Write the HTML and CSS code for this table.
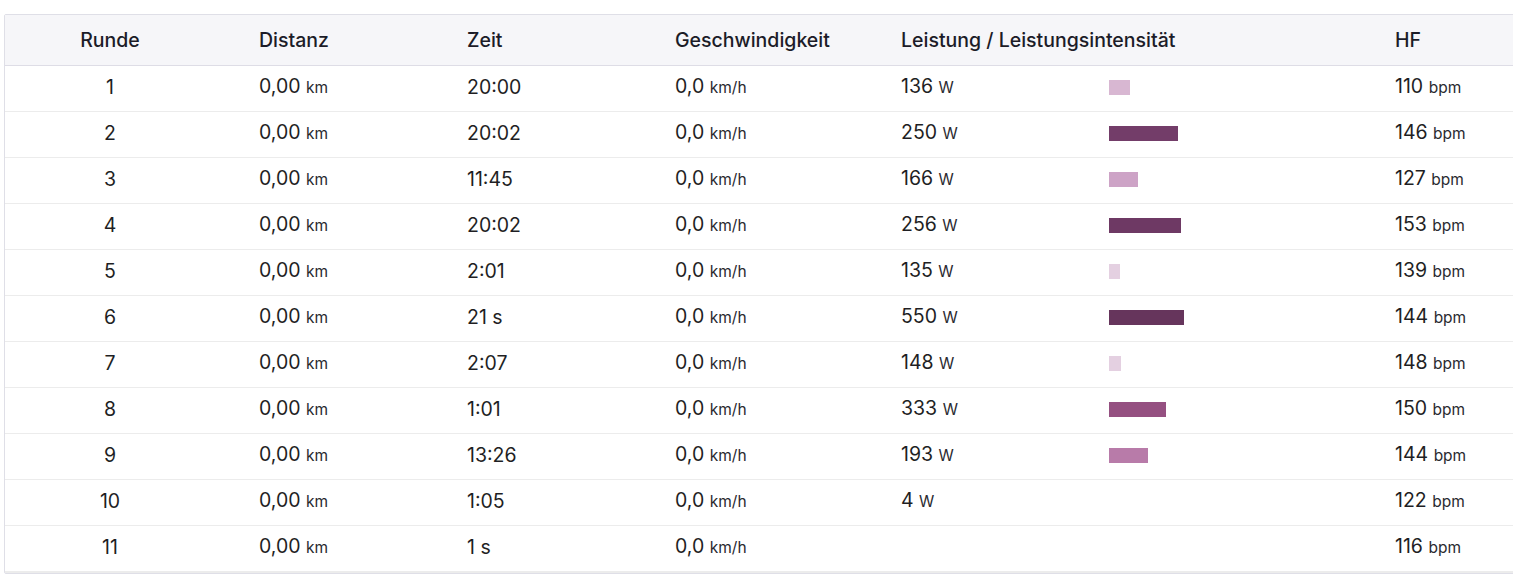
FILE: index.html
```html
<!DOCTYPE html>
<html lang="de">
<head>
<meta charset="utf-8">
<link rel="stylesheet" href="styles.css">
</head>
<body>
<div class="page">
  <div class="card">
    <div class="row head">
      <div class="c c1">Runde</div>
      <div class="c">Distanz</div>
      <div class="c">Zeit</div>
      <div class="c">Geschwindigkeit</div>
      <div class="c span2">Leistung / Leistungsintensität</div>
      <div class="c">HF</div>
    </div>
    <div class="row"><div class="c c1">1</div><div class="c">0,00 <span class="u">km</span></div><div class="c">20:00</div><div class="c">0,0 <span class="u">km/h</span></div><div class="c">136 <span class="u">W</span></div><div class="c"><span class="bar" style="width:21px;background:#d8b7d2"></span></div><div class="c">110 <span class="u">bpm</span></div></div>
    <div class="row"><div class="c c1">2</div><div class="c">0,00 <span class="u">km</span></div><div class="c">20:02</div><div class="c">0,0 <span class="u">km/h</span></div><div class="c">250 <span class="u">W</span></div><div class="c"><span class="bar" style="width:69px;background:#733d69"></span></div><div class="c">146 <span class="u">bpm</span></div></div>
    <div class="row"><div class="c c1">3</div><div class="c">0,00 <span class="u">km</span></div><div class="c">11:45</div><div class="c">0,0 <span class="u">km/h</span></div><div class="c">166 <span class="u">W</span></div><div class="c"><span class="bar" style="width:29px;background:#cda3c6"></span></div><div class="c">127 <span class="u">bpm</span></div></div>
    <div class="row"><div class="c c1">4</div><div class="c">0,00 <span class="u">km</span></div><div class="c">20:02</div><div class="c">0,0 <span class="u">km/h</span></div><div class="c">256 <span class="u">W</span></div><div class="c"><span class="bar" style="width:72px;background:#6e3964"></span></div><div class="c">153 <span class="u">bpm</span></div></div>
    <div class="row"><div class="c c1">5</div><div class="c">0,00 <span class="u">km</span></div><div class="c">2:01</div><div class="c">0,0 <span class="u">km/h</span></div><div class="c">135 <span class="u">W</span></div><div class="c"><span class="bar" style="width:11px;background:#e4d0e1"></span></div><div class="c">139 <span class="u">bpm</span></div></div>
    <div class="row"><div class="c c1">6</div><div class="c">0,00 <span class="u">km</span></div><div class="c">21 s</div><div class="c">0,0 <span class="u">km/h</span></div><div class="c">550 <span class="u">W</span></div><div class="c"><span class="bar" style="width:75px;background:#66355c"></span></div><div class="c">144 <span class="u">bpm</span></div></div>
    <div class="row"><div class="c c1">7</div><div class="c">0,00 <span class="u">km</span></div><div class="c">2:07</div><div class="c">0,0 <span class="u">km/h</span></div><div class="c">148 <span class="u">W</span></div><div class="c"><span class="bar" style="width:12px;background:#e4d0e1"></span></div><div class="c">148 <span class="u">bpm</span></div></div>
    <div class="row"><div class="c c1">8</div><div class="c">0,00 <span class="u">km</span></div><div class="c">1:01</div><div class="c">0,0 <span class="u">km/h</span></div><div class="c">333 <span class="u">W</span></div><div class="c"><span class="bar" style="width:57px;background:#955081"></span></div><div class="c">150 <span class="u">bpm</span></div></div>
    <div class="row"><div class="c c1">9</div><div class="c">0,00 <span class="u">km</span></div><div class="c">13:26</div><div class="c">0,0 <span class="u">km/h</span></div><div class="c">193 <span class="u">W</span></div><div class="c"><span class="bar" style="width:39px;background:#b87ba9"></span></div><div class="c">144 <span class="u">bpm</span></div></div>
    <div class="row"><div class="c c1">10</div><div class="c">0,00 <span class="u">km</span></div><div class="c">1:05</div><div class="c">0,0 <span class="u">km/h</span></div><div class="c">4 <span class="u">W</span></div><div class="c"></div><div class="c">122 <span class="u">bpm</span></div></div>
    <div class="row"><div class="c c1">11</div><div class="c">0,00 <span class="u">km</span></div><div class="c">1 s</div><div class="c">0,0 <span class="u">km/h</span></div><div class="c"></div><div class="c"></div><div class="c">116 <span class="u">bpm</span></div></div>
  </div>
</div>
</body>
</html>
```

FILE: styles.css
```css
html, body {
  margin: 0;
  padding: 0;
  overflow: hidden;
  background: #ffffff;
}
.page {
  padding: 14px 0 0 4px;
}
.card {
  width: 1560px;
  border: 1px solid #dfdfe7;
  border-radius: 2px;
  font-family: Inter, "Noto Sans", sans-serif;
  color: #1f1f24;
  background: #fff;
}
.row {
  box-sizing: border-box;
  display: grid;
  grid-template-columns: 210px 208px 208px 226px 208px 286px 1fr;
  height: 46px;
  align-items: center;
  border-bottom: 1px solid #ececec;
  font-size: 19.5px;
  line-height: 24px;
  padding-bottom: 3px;
}
.row:last-child {
  height: 47px;
  border-bottom: 2px solid #ececec;
}
.head {
  height: 51px;
  padding-bottom: 1px;
  background: #f6f6f9;
  border-bottom: 1px solid #dedde6;
  font-weight: 500;
  color: #1c1c28;
}
.c {
  padding-left: 44px;
  white-space: nowrap;
}
.c1 {
  padding-left: 0;
  text-align: center;
}
.span2 {
  grid-column: span 2;
}
.u {
  font-size: 15.5px;
  color: #2a2a30;
}
.bar {
  display: block;
  height: 15px;
}
```
